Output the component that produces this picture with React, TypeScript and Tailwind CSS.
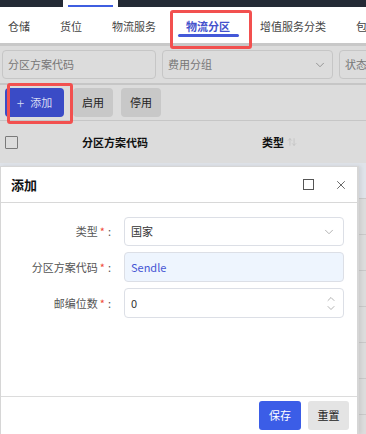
import { ChevronDown, ChevronUp, X, ArrowUpDown } from "lucide-react"

const tabs = ["仓储", "货位", "物流服务", "物流分区", "增值服务分类", "包"]

function Label({ text }: { text: string }) {
  return (
    <div className="w-[111px] shrink-0 text-right text-[11px] text-[#555] pr-[1px]">
      {text}
      <span className="text-[#f04a3a] ml-[2px]">*</span>
      <span className="ml-[3px]">:</span>
    </div>
  )
}

export default function App() {
  return (
    <div className="relative w-[366px] h-[434px] overflow-hidden bg-[#dcdcdc] font-['Noto_Sans_CJK_SC',sans-serif] text-[#333]">
      {/* top app bar */}
      <div className="h-[7px] bg-[#242a35] flex">
        <div className="ml-[63px] w-[55px] bg-white flex items-end justify-center">
          <div className="w-[45px] h-[2px] bg-[#3f5ee0]" />
        </div>
      </div>

      {/* tabs */}
      <div className="h-[36px] bg-white flex items-center pl-[8px] gap-[30px] text-[11px] border-b-[3px] border-[#c8c8c8] box-content">
        {tabs.map((t) => (
          <div
            key={t}
            className={`relative shrink-0 whitespace-nowrap leading-none pt-[2px] ${
              t === "物流分区" ? "text-[#4452cc] font-bold" : "text-[#444]"
            }`}
          >
            {t}
            {t === "物流分区" && (
              <div className="absolute -left-[8px] -right-[9px] top-[15px] h-[3px] rounded-full bg-[#4358d8]" />
            )}
          </div>
        ))}
      </div>

      {/* filters */}
      <div className="h-[39px] flex items-center gap-[6px] pl-[2px] border-b-2 border-[#c6c6c6] text-[11px] text-[#777]">
        <div className="w-[154px] h-[29px] shrink-0 rounded-[4px] border border-[#c6c6c6] flex items-center px-[5px]">
          分区方案代码
        </div>
        <div className="w-[171px] h-[29px] shrink-0 rounded-[4px] border border-[#c6c6c6] flex items-center justify-between px-[5px]">
          费用分组
          <ChevronDown className="w-[14px] h-[14px] text-[#8a8a8a]" strokeWidth={1.5} />
        </div>
        <div className="w-[60px] h-[29px] shrink-0 rounded-[4px] border border-[#c6c6c6] flex items-center px-[5px]">
          状态
        </div>
      </div>

      {/* action buttons */}
      <div className="h-[36px] flex items-center pl-[5px] gap-[8px] border-b border-[#c6c6c6] text-[11px]">
        <div className="w-[59px] h-[29px] rounded-[4px] bg-[#3a4bc6] text-[#d8dcf4] flex items-center justify-center gap-[6px]">
          <span className="text-[14px] font-light leading-none">+</span>
          添加
        </div>
        <div className="ml-[1px] w-[40px] h-[29px] rounded-[4px] bg-[#c8c8c8] text-[#222] flex items-center justify-center">
          启用
        </div>
        <div className="w-[40px] h-[29px] rounded-[4px] bg-[#c8c8c8] text-[#222] flex items-center justify-center">
          停用
        </div>
      </div>

      {/* table header */}
      <div className="h-[42px] flex items-center pl-[5px] text-[11px] font-bold text-[#111]">
        <div className="w-[13px] h-[13px] border border-[#7a7a7a] rounded-[1px]" />
        <div className="ml-[64px] w-[180px]">分区方案代码</div>
        <div className="flex items-center gap-[3px]">
          类型
          <ArrowUpDown className="w-[10px] h-[10px] text-[#bbb]" strokeWidth={1.5} />
        </div>
      </div>

      {/* table rows behind the modal */}
      <div className="flex flex-col">
        <div className="h-[36px] bg-[#dfe3e9] border-b border-[#c9c9c9]" />
        {[0, 1, 2, 3, 4, 5].map((i) => (
          <div key={i} className="h-[36px] border-b border-[#c9c9c9]" />
        ))}
      </div>

      {/* annotation boxes */}
      <div className="absolute left-[170px] top-[10px] w-[82px] h-[39px] border-[3px] border-[#f2504f] rounded-[3px]" />
      <div className="absolute left-[7px] top-[83px] w-[66px] h-[41px] border-[3px] border-[#f2504f] rounded-[3px]" />

      {/* modal */}
      <div className="absolute left-0 top-[166px] w-[359px] h-[268px] bg-white border-l border-r-2 border-t border-[#d6d6d6] flex flex-col shadow-[2px_0_4px_rgba(0,0,0,0.08)]">
        <div className="h-[36px] shrink-0 flex items-center justify-between pl-[10px] pr-[9px] border-b border-[#d8d8d8]">
          <div className="text-[13px] font-bold text-[#111]">添加</div>
          <div className="flex items-center gap-[20px]">
            <div className="w-[11px] h-[11px] border-[1.5px] border-[#555]" />
            <X className="w-[14px] h-[14px] text-[#555]" strokeWidth={1.5} />
          </div>
        </div>

        <div className="flex-1 flex flex-col gap-[6px] pt-[14px]">
          <div className="flex items-center gap-[12px]">
            <Label text="类型" />
            <div className="w-[220px] h-[29px] rounded-[4px] border border-[#dcdfe6] flex items-center justify-between pl-[6px] pr-[7px] text-[11px] text-[#333]">
              国家
              <ChevronDown className="w-[14px] h-[14px] text-[#a8a8a8]" strokeWidth={1.5} />
            </div>
          </div>
          <div className="flex items-center gap-[12px]">
            <Label text="分区方案代码" />
            <div className="w-[220px] h-[30px] rounded-[4px] border border-[#dcdfe6] bg-[#eef5fe] flex items-center pl-[6px] text-[11px] text-[#4656d4]">
              Sendle
            </div>
          </div>
          <div className="flex items-center gap-[12px]">
            <Label text="邮编位数" />
            <div className="w-[220px] h-[30px] rounded-[4px] border border-[#dcdfe6] flex items-center justify-between pl-[6px] pr-[6px] text-[11px] text-[#333]">
              0
              <div className="flex flex-col -space-y-[3px]">
                <ChevronUp className="w-[12px] h-[12px] text-[#9a9a9a]" strokeWidth={1.5} />
                <ChevronDown className="w-[12px] h-[12px] text-[#9a9a9a]" strokeWidth={1.5} />
              </div>
            </div>
          </div>
        </div>

        <div className="h-[38px] shrink-0 border-t border-[#dcdcdc] flex items-start justify-end gap-[7px] pt-[4px] pr-[8px] text-[11px]">
          <div className="w-[42px] h-[29px] rounded-[3px] bg-[#3b5de7] text-white flex items-center justify-center">
            保存
          </div>
          <div className="w-[41px] h-[29px] rounded-[3px] bg-[#e4e4e4] text-[#222] flex items-center justify-center">
            重置
          </div>
        </div>
      </div>
    </div>
  )
}
